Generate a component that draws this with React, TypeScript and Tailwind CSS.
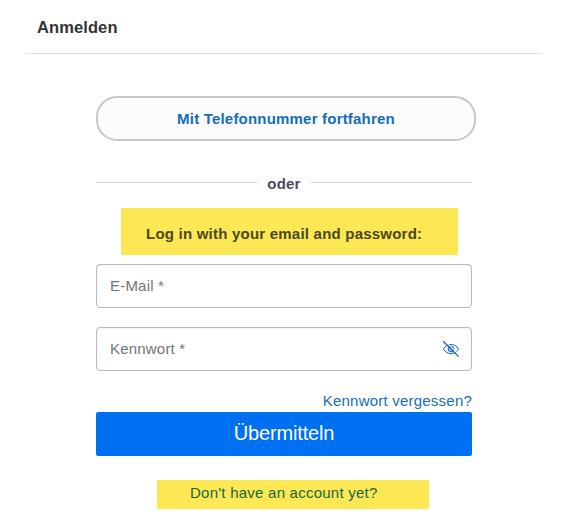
import { useState } from 'react';

function EyeOffIcon() {
  return (
    <svg width="18" height="18" viewBox="0 0 18 18" fill="none" stroke="#1f64b4">
      <path d="M1.500 9C3 6.200 5.600 4.500 9 4.500S15 6.200 16.500 9C15 11.800 12.400 13.500 9 13.500S3 11.800 1.500 9Z" />
      <circle cx="9" cy="9" r="2.800" fill="#1f64b4" fillOpacity="0.350" />
      <path d="M2.400 0.400 18 15.400" stroke="#fff" strokeWidth="0.900" />
      <path d="M1.200 1.200 16.600 16.600" strokeWidth="1.300" />
    </svg>
  );
}

interface FieldProps {
  label: string;
  type: string;
  children?: React.ReactNode;
}

function Field({ label, type, children }: FieldProps) {
  return (
    <div className="flex h-11 items-center rounded border border-[#b5bac4] bg-white pr-[11px] pl-[13px] shadow-[inset_0_1px_2px_rgba(0,0,0,0.05)]">
      <input
        type={type}
        aria-label={label}
        placeholder={label}
        className="min-w-0 flex-1 bg-transparent text-[15px] tracking-[0.2px] text-[#333] outline-none placeholder:text-[#757575]"
      />
      {children}
    </div>
  );
}

export default function App() {
  const [showPassword, setShowPassword] = useState(false);

  return (
    <main className="h-[523px] w-[574px] overflow-hidden bg-white font-['Liberation_Sans',Arial,sans-serif] text-[15px]">
      <header className="mr-8 ml-[26px] h-[54px] border-b border-[#dcdcdc] pt-[15px] pl-[11px]">
        <h1 className="text-[16.500px] leading-6 font-bold tracking-[0.1px] text-[#333]">
          Anmelden
        </h1>
      </header>

      <form className="ml-24 w-[376px] pt-[42px]" onSubmit={(e) => e.preventDefault()}>
        <button
          type="button"
          className="h-[45px] w-[380px] rounded-[21px] border-2 border-[#c8c8c8] bg-[#fcfcfc] pt-0.5 font-bold tracking-[0.2px] text-[#146eb9]"
        >
          Mit Telefonnummer fortfahren
        </button>

        <div className="mt-8 flex h-[22px] items-center gap-2.5">
          <span className="mb-[3px] h-px flex-1 bg-[#d2d2d2]" />
          <span className="font-bold tracking-[0.2px] text-[#4b4b5a]">oder</span>
          <span className="mb-[3px] h-px flex-1 bg-[#d2d2d2]" />
        </div>

        <p className="mt-[13px] ml-[25px] flex h-[47px] w-[337px] items-center bg-[#fce755] pt-1.5 pl-[25px] font-bold tracking-[0.22px] whitespace-nowrap text-[#4c471f]">
          Log in with your email and password:
        </p>

        <div className="mt-[9px] flex flex-col gap-[19px]">
          <Field label="E-Mail *" type="email" />
          <Field label="Kennwort *" type={showPassword ? 'text' : 'password'}>
            <button
              type="button"
              aria-label="Kennwort anzeigen"
              onClick={() => setShowPassword(!showPassword)}
            >
              <EyeOffIcon />
            </button>
          </Field>
        </div>

        <div className="flex h-[41px] items-end justify-end">
          <a href="#reset" className="leading-[22px] tracking-[0.22px] text-[#146eb9]">
            Kennwort vergessen?
          </a>
        </div>
        <button
          type="submit"
          className="h-11 w-full rounded-[2px] bg-[#0070f2] pb-0.5 text-xl tracking-[-0.15px] text-white"
        >
          Übermitteln
        </button>

        <a
          href="#register"
          className="mt-6 ml-[61px] flex h-[29px] w-[272px] items-center bg-[#fce755] pb-[3px] pl-[33px] tracking-[0.24px] text-[#1b6739]"
        >
          Don't have an account yet?
        </a>
      </form>
    </main>
  );
}
